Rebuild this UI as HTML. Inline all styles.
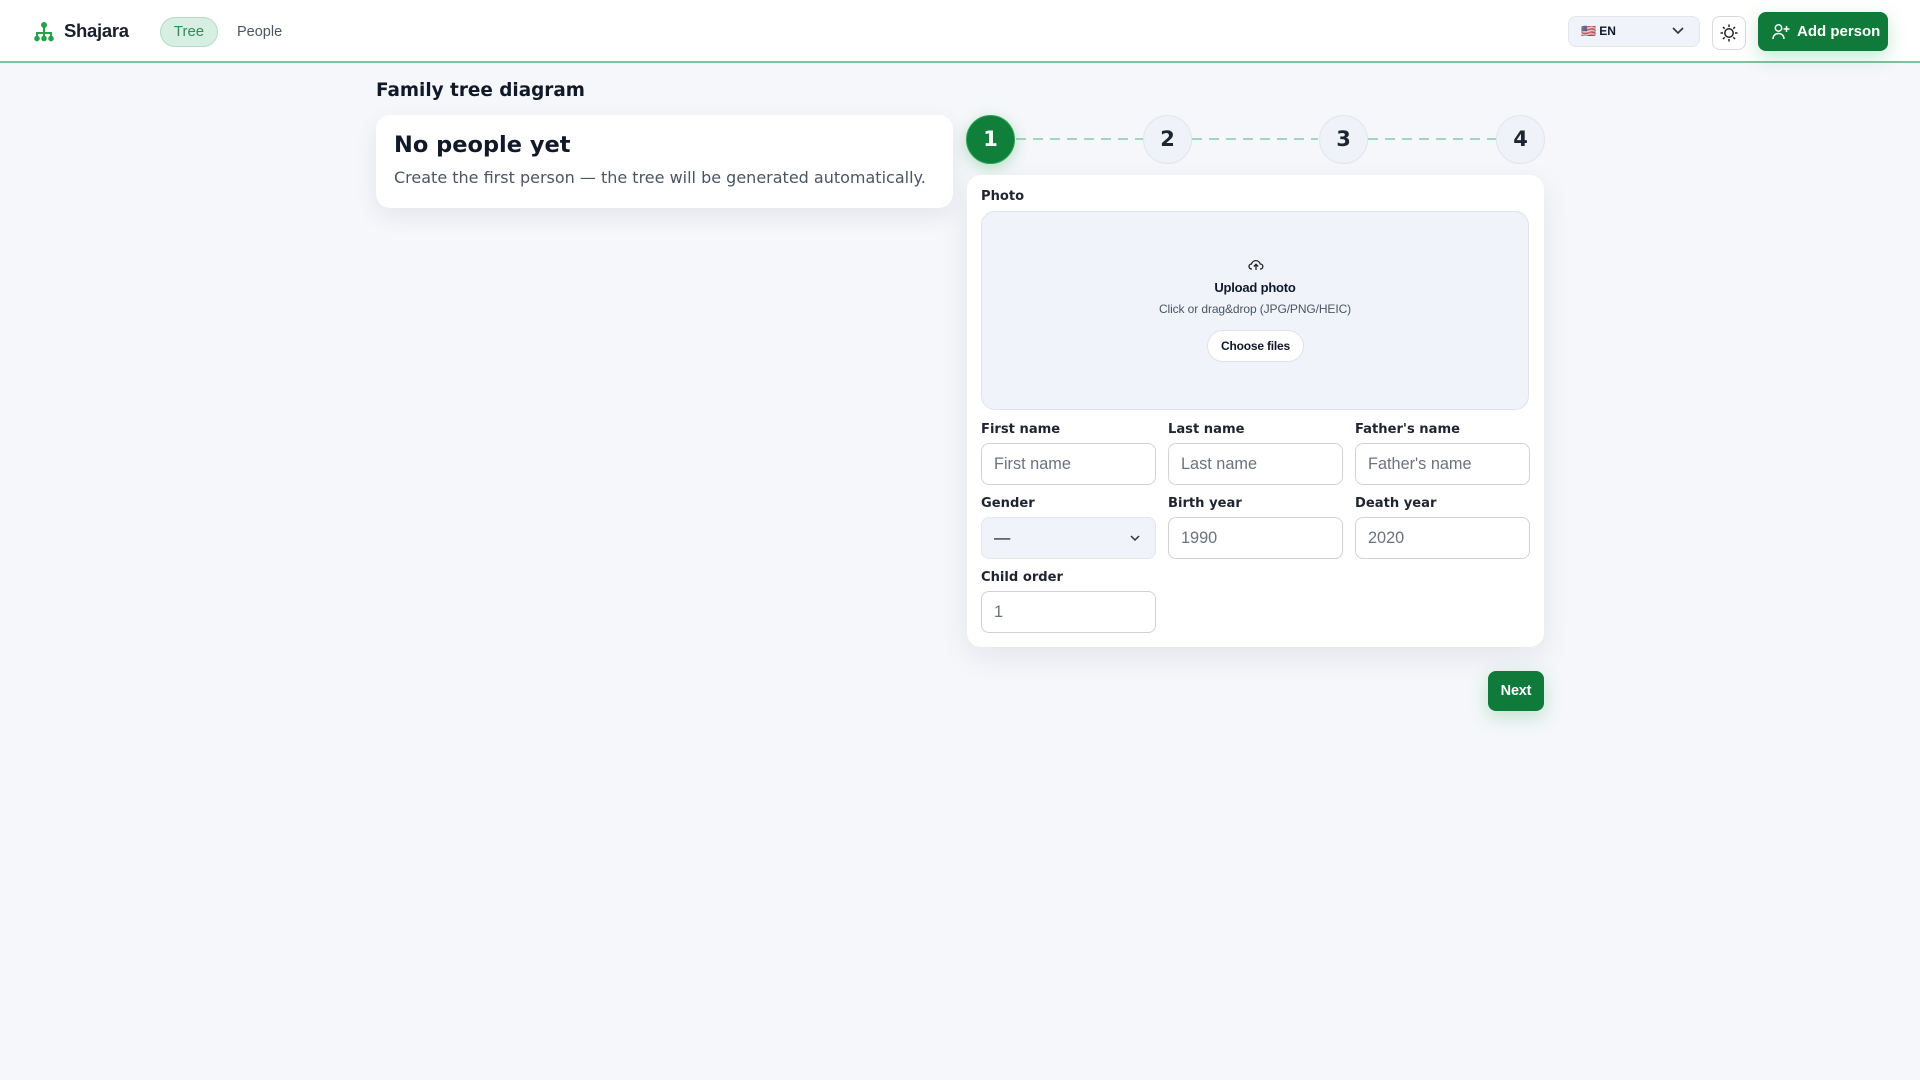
<!DOCTYPE html>
<html><head><meta charset="utf-8"><style>
*{box-sizing:border-box;margin:0;padding:0}
body{width:1920px;height:1080px;background:#f5f7fa;font-family:"Liberation Sans",sans-serif;position:relative;overflow:hidden;color:#111827}
.a{position:absolute}
.hdr{left:0;top:0;width:1920px;height:63px;background:#fff;border-bottom:2px solid #7cc3a0}
.dv{font-family:"DejaVu Sans",sans-serif}
.lbl{font-family:"DejaVu Sans",sans-serif;font-weight:bold;font-size:13.1px;color:#1f2430}
.inp{height:42px;border:1px solid #cfd2d8;border-radius:8px;background:#fff;font-size:16.3px;color:#6b7280;padding-left:12px;line-height:40px;width:175px}
.step{width:49px;height:49px;border-radius:50%;background:#eff2f8;border:1px solid #e2e5ec;font-family:"DejaVu Sans",sans-serif;font-weight:bold;font-size:21px;text-align:center;line-height:47px;color:#1f2430;top:115px}
.dash{top:138px;height:2px;background:repeating-linear-gradient(90deg,#a6d6b8 0 10px,transparent 10px 17px)}
</style></head><body>
<div class="a hdr"></div>
<svg class="a" style="left:33px;top:21px" width="22" height="22" viewBox="0 0 22 22" fill="#22a34a"><circle cx="11" cy="4" r="3"/><rect x="10" y="6" width="2" height="6"/><rect x="3" y="11" width="16" height="2"/><rect x="3" y="11" width="2" height="5"/><rect x="17" y="11" width="2" height="5"/><rect x="10" y="11" width="2" height="5"/><circle cx="4" cy="17.5" r="2.8"/><circle cx="11" cy="17.5" r="2.8"/><circle cx="18" cy="17.5" r="2.8"/></svg>
<div class="a" style="left:64px;top:20px;font-size:18.5px;letter-spacing:-0.3px;font-weight:bold;color:#1a1f2b">Shajara</div>
<div class="a" style="left:160px;top:17px;width:58px;height:30px;border-radius:15px;background:#d7efe3;border:1px solid #b5dcc6;color:#2f8d5a;font-size:15px;text-align:center;line-height:28px">Tree</div>
<div class="a" style="left:237px;top:24px;font-size:14.5px;color:#4b5563">People</div>
<div class="a" style="left:1568px;top:16px;width:132px;height:31px;border-radius:8px;background:#f0f3f9;border:1px solid #e3e6ee;font-size:12px;font-weight:bold;line-height:29px;padding-left:12px">🇺🇸 EN</div>
<svg class="a" style="left:1671px;top:25px" width="14" height="12" viewBox="0 0 14 12"><path d="M2 3l5 5 5-5" stroke="#333" stroke-width="1.6" fill="none"/></svg>
<div class="a" style="left:1712px;top:16px;width:34px;height:34px;border-radius:8px;background:#fff;border:1px solid #d6d9df"></div>
<svg class="a" style="left:1719px;top:23px" width="20" height="20" viewBox="0 0 20 20" stroke="#222" stroke-width="1.5" fill="none"><circle cx="10" cy="10" r="4.2"/><path d="M10 1.5v2.5M10 16v2.5M1.5 10h2.5M16 10h2.5M4 4l1.7 1.7M14.3 14.3L16 16M4 16l1.7-1.7M14.3 5.7L16 4"/></svg>
<div class="a" style="left:1758px;top:12px;width:130px;height:39px;border-radius:8px;background:#0f7a39;box-shadow:0 6px 18px rgba(34,163,74,.25);color:#fff;font-weight:bold;font-size:15px;line-height:39px;padding-left:39px">Add person</div>
<svg class="a" style="left:1772px;top:23px" width="18" height="17" viewBox="0 0 18 17" stroke="#fff" stroke-width="1.5" fill="none"><circle cx="6.5" cy="5" r="3.2"/><path d="M1 16c0-3.5 2.5-5.5 5.5-5.5S12 12.5 12 16M14.5 3v6M11.5 6h6"/></svg>

<div class="a dv" style="left:376px;top:80px;font-size:18.4px;font-weight:bold;color:#111827">Family tree diagram</div>
<div class="a" style="left:376px;top:115px;width:577px;height:93px;background:#fff;border-radius:14px;box-shadow:0 8px 24px rgba(20,30,60,.08)"></div>
<div class="a dv" style="left:394px;top:132px;font-size:22.5px;font-weight:bold;color:#111827">No people yet</div>
<div class="a dv" style="left:394px;top:168px;font-size:16px;color:#4b5563">Create the first person — the tree will be generated automatically.</div>

<div class="a dash" style="left:1016px;width:127px"></div>
<div class="a dash" style="left:1192px;width:126px"></div>
<div class="a dash" style="left:1368px;width:128px"></div>
<div class="a step" style="left:966px;background:#0f7f3a;border-color:#2aa352;color:#fff;box-shadow:0 4px 14px rgba(34,163,74,.3)">1</div>
<div class="a step" style="left:1143px">2</div>
<div class="a step" style="left:1319px">3</div>
<div class="a step" style="left:1496px">4</div>

<div class="a" style="left:967px;top:175px;width:577px;height:472px;background:#fff;border-radius:14px;box-shadow:0 10px 30px rgba(20,30,60,.08)"></div>
<div class="a lbl" style="left:981px;top:189px">Photo</div>
<div class="a" style="left:981px;top:211px;width:548px;height:199px;border-radius:14px;background:#f0f3fa;border:1px solid #dfe3ec"></div>
<svg class="a" style="left:1248px;top:258px" width="16" height="14" viewBox="0 0 16 14" stroke="#222" stroke-width="1.3" fill="none"><path d="M4 11H3.5A2.5 2.5 0 0 1 3.5 6a4.5 4.5 0 0 1 8.7 0A2.5 2.5 0 0 1 12.5 11H12M8 12V6.5M5.8 8.5L8 6.3l2.2 2.2"/></svg>
<div class="a" style="left:981px;top:280px;width:548px;text-align:center;font-size:13px;font-weight:bold;color:#111827;letter-spacing:-0.2px">Upload photo</div>
<div class="a" style="left:981px;top:302px;width:548px;text-align:center;font-size:12px;color:#4b5563;letter-spacing:-0.1px">Click or drag&amp;drop (JPG/PNG/HEIC)</div>
<div class="a" style="left:1207px;top:330px;width:97px;height:32px;border-radius:16px;background:#fff;border:1px solid #dfe2e8;font-size:12px;font-weight:bold;text-align:center;line-height:30px;letter-spacing:-0.2px">Choose files</div>

<div class="a lbl" style="left:981px;top:422px">First name</div>
<div class="a lbl" style="left:1168px;top:422px">Last name</div>
<div class="a lbl" style="left:1355px;top:422px">Father's name</div>
<div class="a inp" style="left:981px;top:443px">First name</div>
<div class="a inp" style="left:1168px;top:443px">Last name</div>
<div class="a inp" style="left:1355px;top:443px">Father's name</div>
<div class="a lbl" style="left:981px;top:496px">Gender</div>
<div class="a lbl" style="left:1168px;top:496px">Birth year</div>
<div class="a lbl" style="left:1355px;top:496px">Death year</div>
<div class="a inp" style="left:981px;top:517px;background:#f0f3fa;border-color:#e3e6ee;color:#111">—</div>
<svg class="a" style="left:1128px;top:532px" width="14" height="12" viewBox="0 0 14 12"><path d="M3 4l4 4 4-4" stroke="#333" stroke-width="1.5" fill="none"/></svg>
<div class="a inp" style="left:1168px;top:517px">1990</div>
<div class="a inp" style="left:1355px;top:517px">2020</div>
<div class="a lbl" style="left:981px;top:570px">Child order</div>
<div class="a inp" style="left:981px;top:591px">1</div>

<div class="a" style="left:1488px;top:671px;width:56px;height:40px;border-radius:8px;background:#0f7a39;box-shadow:0 6px 18px rgba(34,163,74,.25);color:#fff;font-weight:bold;font-size:14.5px;text-align:center;line-height:40px;letter-spacing:-0.2px">Next</div>
</body></html>
